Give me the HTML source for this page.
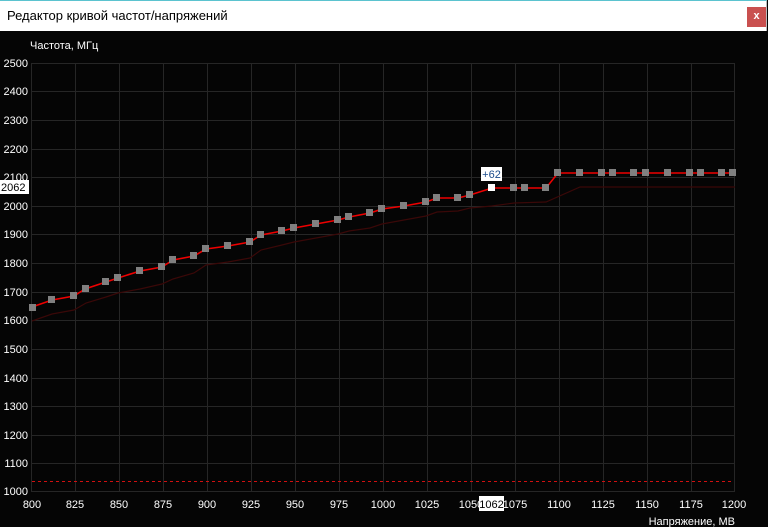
<!DOCTYPE html>
<html><head><meta charset="utf-8">
<style>
html,body{margin:0;padding:0;width:768px;height:527px;overflow:hidden;background:#050505;font-family:"Liberation Sans",sans-serif;}
#title{position:absolute;left:0;top:0;width:767px;height:31px;background:#fff;border-top:1px solid #5bc3cf;box-sizing:border-box;border-right:1px solid #bbb;}
#title span{position:absolute;left:7px;top:7px;font-size:13px;color:#000;}
#close{position:absolute;left:747px;top:6px;width:19px;height:20px;background:#c9504f;color:#fff;font-size:11px;font-weight:bold;text-align:center;line-height:19px;}
svg{position:absolute;left:0;top:31px;}
</style></head><body>
<div id="title"><span>Редактор кривой частот/напряжений</span><div id="close">x</div></div>
<svg width="768" height="496" viewBox="0 31 768 496" xmlns="http://www.w3.org/2000/svg" font-family="Liberation Sans, sans-serif" font-size="11">
<g stroke="#262626" stroke-width="1" fill="none">
<path d="M31.5 63V492M75.5 63V492M119.5 63V492M163.5 63V492M207.5 63V492M251.5 63V492M295.5 63V492M339.5 63V492M383.5 63V492M427.5 63V492M471.5 63V492M515.5 63V492M559.5 63V492M603.5 63V492M647.5 63V492M691.5 63V492M734.5 63V492"/>
<path d="M31 63.5H735M31 91.5H735M31 120.5H735M31 149.5H735M31 177.5H735M31 206.5H735M31 234.5H735M31 263.5H735M31 292.5H735M31 320.5H735M31 349.5H735M31 378.5H735M31 406.5H735M31 435.5H735M31 463.5H735M31 491.5H735"/>
</g>
<line x1="32" y1="481.5" x2="734" y2="481.5" stroke="#d01010" stroke-dasharray="3,3"/>
<polyline fill="none" stroke="#3a0808" stroke-width="1.2" points="32,321 52,314 74,310 86,303 106,297 118,293 140,289 162,284 173,279 194,273 206,265 228,262 250,258 261,250 282,245 294,242 316,238 338,234 349,231 370,228 382,224 404,220 426,216 437,212 458,211 470,208 492,206 514,203 546,202 580,187 735,187"/>
<polyline fill="none" stroke="#ee0000" stroke-width="1.6" points="32,307 52,300 74,296 85,289 106,282 118,278 140,271 162,267 173,260 194,256 206,249 228,246 250,242 261,235 282,231 294,228 316,224 338,220 349,217 370,213 382,209 404,206 426,202 437,198 458,198 470,195 492,188 514,188 525,188 546,188 558,173 735,173"/>
<g fill="#808080">
<rect x="29" y="304" width="7" height="7"/><rect x="48" y="296" width="7" height="7"/><rect x="70" y="292" width="7" height="7"/><rect x="82" y="285" width="7" height="7"/><rect x="102" y="278" width="7" height="7"/><rect x="114" y="274" width="7" height="7"/><rect x="136" y="267" width="7" height="7"/><rect x="158" y="263" width="7" height="7"/><rect x="169" y="256" width="7" height="7"/><rect x="190" y="252" width="7" height="7"/><rect x="202" y="245" width="7" height="7"/><rect x="224" y="242" width="7" height="7"/><rect x="246" y="238" width="7" height="7"/><rect x="257" y="231" width="7" height="7"/><rect x="278" y="227" width="7" height="7"/><rect x="290" y="224" width="7" height="7"/><rect x="312" y="220" width="7" height="7"/><rect x="334" y="216" width="7" height="7"/><rect x="345" y="213" width="7" height="7"/><rect x="366" y="209" width="7" height="7"/><rect x="378" y="205" width="7" height="7"/><rect x="400" y="202" width="7" height="7"/><rect x="422" y="198" width="7" height="7"/><rect x="433" y="194" width="7" height="7"/><rect x="454" y="194" width="7" height="7"/><rect x="466" y="191" width="7" height="7"/><rect x="510" y="184" width="7" height="7"/><rect x="521" y="184" width="7" height="7"/><rect x="542" y="184" width="7" height="7"/>
<rect x="554" y="169" width="7" height="7"/><rect x="576" y="169" width="7" height="7"/><rect x="598" y="169" width="7" height="7"/><rect x="609" y="169" width="7" height="7"/><rect x="630" y="169" width="7" height="7"/><rect x="642" y="169" width="7" height="7"/><rect x="664" y="169" width="7" height="7"/><rect x="686" y="169" width="7" height="7"/><rect x="697" y="169" width="7" height="7"/><rect x="718" y="169" width="7" height="7"/><rect x="729" y="169" width="7" height="7"/>
</g>
<rect x="488" y="184" width="7" height="7" fill="#fff"/>
<rect x="481" y="167" width="21" height="14" fill="#fff"/>
<text x="491.5" y="178" text-anchor="middle" fill="#1a4b8c">+62</text>
<text x="30" y="49" fill="#fff">Частота, МГц</text>
<g fill="#fff" text-anchor="end">
<text x="28" y="67">2500</text><text x="28" y="95">2400</text><text x="28" y="124">2300</text><text x="28" y="153">2200</text><text x="28" y="181">2100</text><text x="28" y="210">2000</text><text x="28" y="238">1900</text><text x="28" y="267">1800</text><text x="28" y="296">1700</text><text x="28" y="324">1600</text><text x="28" y="353">1500</text><text x="28" y="382">1400</text><text x="28" y="410">1300</text><text x="28" y="439">1200</text><text x="28" y="467">1100</text><text x="28" y="495">1000</text>
</g>
<rect x="0" y="180" width="29" height="14" fill="#fff"/>
<text x="1" y="191" fill="#000">2062</text>
<g fill="#fff" text-anchor="middle">
<text x="32" y="508">800</text><text x="75" y="508">825</text><text x="119" y="508">850</text><text x="163" y="508">875</text><text x="207" y="508">900</text><text x="251" y="508">925</text><text x="295" y="508">950</text><text x="339" y="508">975</text><text x="383" y="508">1000</text><text x="427" y="508">1025</text><text x="471" y="508">1050</text><text x="515" y="508">1075</text><text x="559" y="508">1100</text><text x="603" y="508">1125</text><text x="647" y="508">1150</text><text x="691" y="508">1175</text><text x="734" y="508">1200</text>
</g>
<rect x="479" y="496" width="25" height="15" fill="#fff"/>
<text x="491.5" y="508" text-anchor="middle" fill="#000">1062</text>
<text x="735" y="525" text-anchor="end" fill="#fff">Напряжение, МВ</text>
</svg>
</body></html>
